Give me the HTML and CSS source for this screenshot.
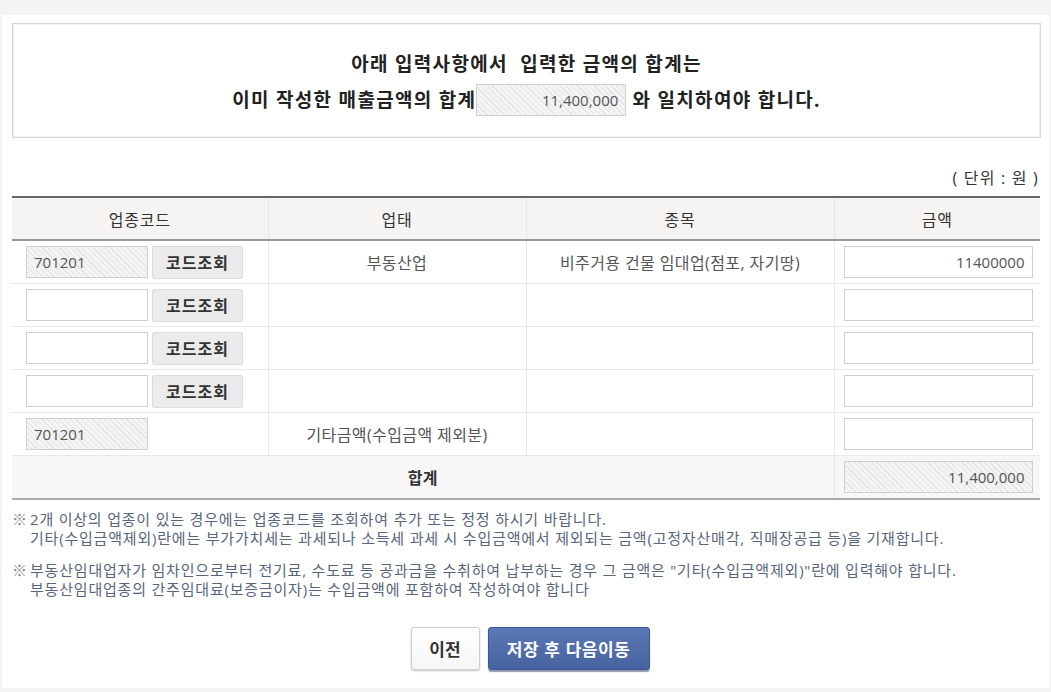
FILE: index.html
```html
<!DOCTYPE html>
<html lang="ko">
<head>
    <meta charset="UTF-8">
    <meta name="viewport" content="width=device-width, initial-scale=1.0">
    <title>수입금액 입력</title>
    <link rel="stylesheet" href="styles.css">
</head>
<body>
    <div class="page">
        <!-- 합계 안내 -->
        <div class="notice">
            <p class="notice-line">아래 입력사항에서&nbsp; 입력한 금액의 합계는</p>
            <p class="notice-line">이미 작성한 매출금액의 합계<input type="text" class="field readonly sum-field" value="11,400,000" readonly> 와 일치하여야 합니다.</p>
        </div>

        <div class="unit">( 단위 : 원 )</div>

        <table class="grid">
            <colgroup>
                <col class="col-code">
                <col class="col-type">
                <col class="col-item">
                <col class="col-amount">
            </colgroup>
            <thead>
                <tr>
                    <th>업종코드</th>
                    <th>업태</th>
                    <th>종목</th>
                    <th>금액</th>
                </tr>
            </thead>
            <tbody>
                <tr>
                    <td class="code-cell">
                        <input type="text" class="field readonly code-field" value="701201" readonly><button type="button" class="btn-lookup">코드조회</button>
                    </td>
                    <td>부동산업</td>
                    <td>비주거용 건물 임대업(점포, 자기땅)</td>
                    <td class="amount-cell"><input type="text" class="field amount-field" value="11400000"></td>
                </tr>
                <tr>
                    <td class="code-cell">
                        <input type="text" class="field code-field"><button type="button" class="btn-lookup">코드조회</button>
                    </td>
                    <td></td>
                    <td></td>
                    <td class="amount-cell"><input type="text" class="field amount-field"></td>
                </tr>
                <tr>
                    <td class="code-cell">
                        <input type="text" class="field code-field"><button type="button" class="btn-lookup">코드조회</button>
                    </td>
                    <td></td>
                    <td></td>
                    <td class="amount-cell"><input type="text" class="field amount-field"></td>
                </tr>
                <tr>
                    <td class="code-cell">
                        <input type="text" class="field code-field"><button type="button" class="btn-lookup">코드조회</button>
                    </td>
                    <td></td>
                    <td></td>
                    <td class="amount-cell"><input type="text" class="field amount-field"></td>
                </tr>
                <tr>
                    <td class="code-cell">
                        <input type="text" class="field readonly code-field" value="701201" readonly>
                    </td>
                    <td>기타금액(수입금액 제외분)</td>
                    <td></td>
                    <td class="amount-cell"><input type="text" class="field amount-field"></td>
                </tr>
            </tbody>
            <tfoot>
                <tr>
                    <td colspan="3" class="total-label">합계</td>
                    <td class="amount-cell"><input type="text" class="field readonly amount-field" value="11,400,000" readonly></td>
                </tr>
            </tfoot>
        </table>

        <!-- 안내 문구 -->
        <ul class="notes">
            <li>
                <span class="mark">※</span>
                <span>2개 이상의 업종이 있는 경우에는 업종코드를 조회하여 추가 또는 정정 하시기 바랍니다.<br>기타(수입금액제외)란에는 부가가치세는 과세되나 소득세 과세 시 수입금액에서 제외되는 금액(고정자산매각, 직매장공급 등)을 기재합니다.</span>
            </li>
            <li>
                <span class="mark">※</span>
                <span>부동산임대업자가 임차인으로부터 전기료, 수도료 등 공과금을 수취하여 납부하는 경우 그 금액은 "기타(수입금액제외)"란에 입력해야 합니다.<br>부동산임대업종의 간주임대료(보증금이자)는 수입금액에 포함하여 작성하여야 합니다</span>
            </li>
        </ul>

        <div class="actions">
            <button type="button" class="btn btn-prev">이전</button>
            <button type="button" class="btn btn-next">저장 후 다음이동</button>
        </div>
    </div>
</body>
</html>
```

FILE: styles.css
```css
body {
    margin: 0;
    padding: 15px 2px 4px 2px;
    background-color: #f4f4f4;
    font-family: "Open Sans", "Noto Sans CJK KR", sans-serif;
    color: #333;
}
.page {
    background: white;
    padding: 8px 8px 18px 10px;
}

/* 합계 안내 */
.notice {
    border: 1px solid #d6d6d6;
    box-shadow: inset 0 0 0 1px #f0f0f0;
    padding: 22px 0 19px;
    text-align: center;
}
.notice-line {
    margin: 0;
    height: 36px;
    line-height: 36px;
    font-size: 19px;
    font-weight: bold;
    color: #222;
    letter-spacing: 1.3px;
}
.field {
    box-sizing: border-box;
    height: 32px;
    border: 1px solid #cfcfcf;
    background: white;
    padding: 0 7px;
    font-family: "Open Sans", "Noto Sans CJK KR", sans-serif;
    font-size: 15px;
    color: #555;
    vertical-align: middle;
    outline: none;
}
.readonly {
    background-color: #f4f4f4;
    background-image: repeating-linear-gradient(45deg, #f4f4f4 0, #f4f4f4 3px, #e4e4e4 3px, #e4e4e4 4px);
}
.sum-field {
    width: 150px;
    text-align: right;
    letter-spacing: 0;
    font-weight: normal;
    margin: -3px 0 0 0;
}

.unit {
    margin-top: 30px;
    margin-bottom: 8px;
    height: 20px;
    line-height: 20px;
    text-align: right;
    font-size: 16px;
    color: #333;
    letter-spacing: 1.2px;
    padding-right: 2px;
}

/* 입력표 */
.grid {
    width: 1028px;
    border-collapse: collapse;
    table-layout: fixed;
    border-top: 2px solid #666;
    border-bottom: 2px solid #aaa;
}
.col-code { width: 256px; }
.col-type { width: 258px; }
.col-item { width: 308px; }
.col-amount { width: 206px; }
.grid th {
    height: 41px;
    padding: 0;
    background: #f5f4f2;
    border-bottom: 2px solid #999;
    border-left: 1px solid #e6e6e6;
    font-size: 16px;
    font-weight: normal;
    color: #333;
    letter-spacing: 0.8px;
}
.grid td {
    height: 42px;
    padding: 0;
    border-bottom: 1px solid #e8e8e8;
    border-left: 1px solid #e8e8e8;
    text-align: center;
    font-size: 16px;
    color: #555;
    letter-spacing: 0.4px;
}
.grid th:first-child, .grid td:first-child {
    border-left: none;
}
.grid .code-cell {
    text-align: left;
    padding-left: 14px;
    letter-spacing: 0;
}
.code-field {
    width: 122px;
}
.btn-lookup {
    box-sizing: border-box;
    width: 91px;
    height: 33px;
    margin-left: 4px;
    vertical-align: middle;
    border: 1px solid #dcdcdc;
    border-radius: 2px;
    background: #ebebeb;
    font-family: "Noto Sans CJK KR", sans-serif;
    font-size: 16px;
    font-weight: bold;
    color: #333;
    letter-spacing: 1px;
    cursor: pointer;
}
.grid .amount-cell {
    text-align: left;
    padding-left: 9px;
    letter-spacing: 0;
}
.amount-field {
    width: 189px;
    text-align: right;
}
.grid tfoot td {
    background: #f7f7f7;
    border-bottom: none;
}
.grid .total-label {
    font-weight: bold;
    color: #333;
}

/* 안내 문구 */
.notes {
    list-style: none;
    margin: 10px 0 0 0;
    padding: 0;
}
.notes li {
    display: flex;
    font-size: 15px;
    line-height: 19px;
    color: #59657a;
    letter-spacing: 0.8px;
    margin-bottom: 13px;
}
.notes .mark {
    width: 18px;
    flex-shrink: 0;
    color: #888;
    letter-spacing: 0;
}

.actions {
    display: flex;
    justify-content: center;
    gap: 8px;
    margin-top: 28px;
    padding-left: 7px;
}
.btn {
    box-sizing: border-box;
    height: 43px;
    border-radius: 3px;
    font-family: "Noto Sans CJK KR", sans-serif;
    font-size: 17px;
    font-weight: bold;
    cursor: pointer;
}
.btn-prev {
    width: 69px;
    background: linear-gradient(#ffffff, #f6f6f6);
    border: 1px solid #cfcfcf;
    box-shadow: 0 1px 2px rgba(0, 0, 0, 0.25);
    color: #333;
}
.btn-next {
    width: 162px;
    background: linear-gradient(#5b79b6, #46629f);
    border: 1px solid #3e5792;
    box-shadow: 0 2px 1px rgba(30, 50, 100, 0.5);
    color: white;
    letter-spacing: 0.5px;
}
.btn-next:hover {
    background: #3f5a94;
}
```
